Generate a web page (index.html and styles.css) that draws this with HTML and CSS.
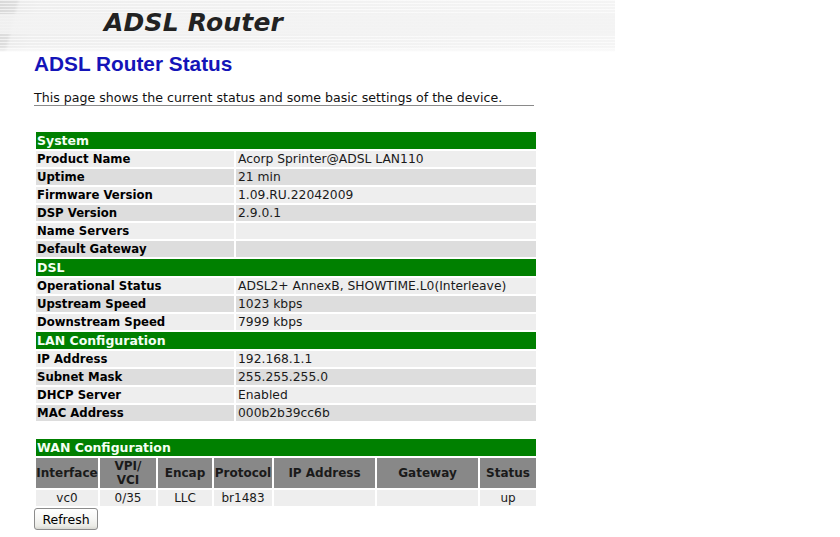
FILE: index.html
```html
<!DOCTYPE html>
<html>
<head>
<meta charset="utf-8">
<title>ADSL Router Status</title>
<link rel="stylesheet" href="styles.css">
</head>
<body>
<div class="banner"><span class="brand">ADSL Router</span></div>
<div class="content">
  <h1 class="title">ADSL Router Status</h1>
  <p class="intro">This page shows the current status and some basic settings of the device.</p>

  <table class="info">
    <colgroup><col class="c-label"><col class="c-value"></colgroup>
    <tr class="sect"><td colspan="2">System</td></tr>
    <tr class="odd"><th>Product Name</th><td>Acorp Sprinter@ADSL LAN110</td></tr>
    <tr class="even"><th>Uptime</th><td>21 min</td></tr>
    <tr class="odd"><th>Firmware Version</th><td>1.09.RU.22042009</td></tr>
    <tr class="even"><th>DSP Version</th><td>2.9.0.1</td></tr>
    <tr class="odd"><th>Name Servers</th><td></td></tr>
    <tr class="even"><th>Default Gateway</th><td></td></tr>
    <tr class="sect"><td colspan="2">DSL</td></tr>
    <tr class="odd"><th>Operational Status</th><td>ADSL2+ AnnexB, SHOWTIME.L0(Interleave)</td></tr>
    <tr class="even"><th>Upstream Speed</th><td>1023 kbps</td></tr>
    <tr class="odd"><th>Downstream Speed</th><td>7999 kbps</td></tr>
    <tr class="sect"><td colspan="2">LAN Configuration</td></tr>
    <tr class="odd"><th>IP Address</th><td>192.168.1.1</td></tr>
    <tr class="even"><th>Subnet Mask</th><td>255.255.255.0</td></tr>
    <tr class="odd"><th>DHCP Server</th><td>Enabled</td></tr>
    <tr class="even"><th>MAC Address</th><td>000b2b39cc6b</td></tr>
  </table>

  <table class="wan">
    <colgroup>
      <col class="c-if"><col class="c-vpi"><col class="c-enc"><col class="c-pro">
      <col class="c-ip"><col class="c-gw"><col class="c-st">
    </colgroup>
    <tr class="sect"><td colspan="7">WAN Configuration</td></tr>
    <tr class="head">
      <th>Interface</th>
      <th>VPI/<br>VCI</th>
      <th>Encap</th>
      <th>Protocol</th>
      <th>IP Address</th>
      <th>Gateway</th>
      <th>Status</th>
    </tr>
    <tr class="odd">
      <td>vc0</td><td>0/35</td><td>LLC</td><td>br1483</td><td></td><td></td><td>up</td>
    </tr>
  </table>

  <button class="refresh" type="button">Refresh</button>
</div>
</body>
</html>
```

FILE: styles.css
```css
html, body {
  margin: 0;
  padding: 0;
  background: #ffffff;
}

body {
  font-family: "DejaVu Sans", Verdana, sans-serif;
  font-size: 12px;
  color: #000000;
}

.banner {
  width: 615px;
  height: 52px;
  background:
    linear-gradient(to bottom, rgba(255,255,255,0) 0, rgba(255,255,255,0) 46px, rgba(255,255,255,0.7) 52px),
    linear-gradient(to bottom, rgba(0,0,0,0) 0, rgba(0,0,0,0) 14px, rgba(243,243,243,0.85) 14px, rgba(243,243,243,0.85) 34px, rgba(0,0,0,0) 34px),
    repeating-linear-gradient(to bottom, rgba(255,255,255,0.6) 0, rgba(255,255,255,0.6) 1px, rgba(0,0,0,0) 1px, rgba(0,0,0,0) 3px),
    linear-gradient(104deg, #d9d9d9 0, #dedede 16px, #ececec 20px, #efefef 40px, #f2f2f2 55%, #f4f4f4 100%);
  display: flex;
  align-items: center;
  padding-left: 104px;
  box-sizing: border-box;
}

.brand {
  font-family: "DejaVu Sans", Verdana, sans-serif;
  font-weight: bold;
  font-style: oblique;
  font-size: 25px;
  color: #222222;
  letter-spacing: 0.2px;
  margin-top: -8px;
}

.content {
  padding-left: 34px;
}

.title {
  margin: 0;
  font-family: "Liberation Sans", Arial, sans-serif;
  font-size: 20.8px;
  line-height: 24px;
  font-weight: bold;
  color: #1414b8;
}

.intro {
  margin: 15px 0 0 0;
  width: 500px;
  line-height: 14px;
  font-size: 12.6px;
  color: #111111;
  border-bottom: 1px solid #8a8a8a;
}

table {
  border-collapse: separate;
  border-spacing: 2px;
  width: 504px;
  table-layout: fixed;
}

.info {
  margin-top: 24px;
}

.c-label { width: 198px; }
.c-value { width: 300px; }

th, td {
  padding: 0 0 0 1px;
  height: 16px;
  line-height: 16px;
  text-align: left;
  white-space: nowrap;
  overflow: hidden;
}

th {
  font-weight: bold;
  font-size: 11.7px;
}

td {
  font-size: 12.3px;
}

.info td {
  padding-left: 2px;
  color: #1a1a1a;
}

.sect td {
  background: #008000;
  color: #f4fff4;
  font-weight: bold;
  height: 17px;
  line-height: 17px;
  font-size: 12.5px;
  padding-left: 1px;
}

.odd th, .odd td {
  background: #eeeeee;
}

.even th, .even td {
  background: #dddddd;
}

.wan {
  margin-top: 14px;
}

.wan .head th {
  background: #888888;
  color: #1a1a1a;
  text-align: center;
  line-height: 14px;
  height: 30px;
  padding: 0;
  font-size: 12px;
  white-space: normal;
}

.wan .odd td {
  text-align: center;
  padding: 0;
  color: #1a1a1a;
  font-size: 12px;
}

.c-if { width: 62px; }
.c-vpi { width: 56px; }
.c-enc { width: 54px; }
.c-pro { width: 58px; }
.c-ip { width: 101px; }
.c-gw { width: 101px; }
.c-st { width: 56px; }

.refresh {
  display: block;
  margin-top: 0;
  width: 64px;
  height: 22px;
  padding: 0;
  font-family: "DejaVu Sans", Verdana, sans-serif;
  font-size: 12.5px;
  color: #000000;
  border: 1px solid #8c8c8c;
  border-radius: 3px;
  background: linear-gradient(to bottom, #ffffff 0, #f6f6f4 50%, #ebebe6 85%, #d8d8d2 100%);
}
```
